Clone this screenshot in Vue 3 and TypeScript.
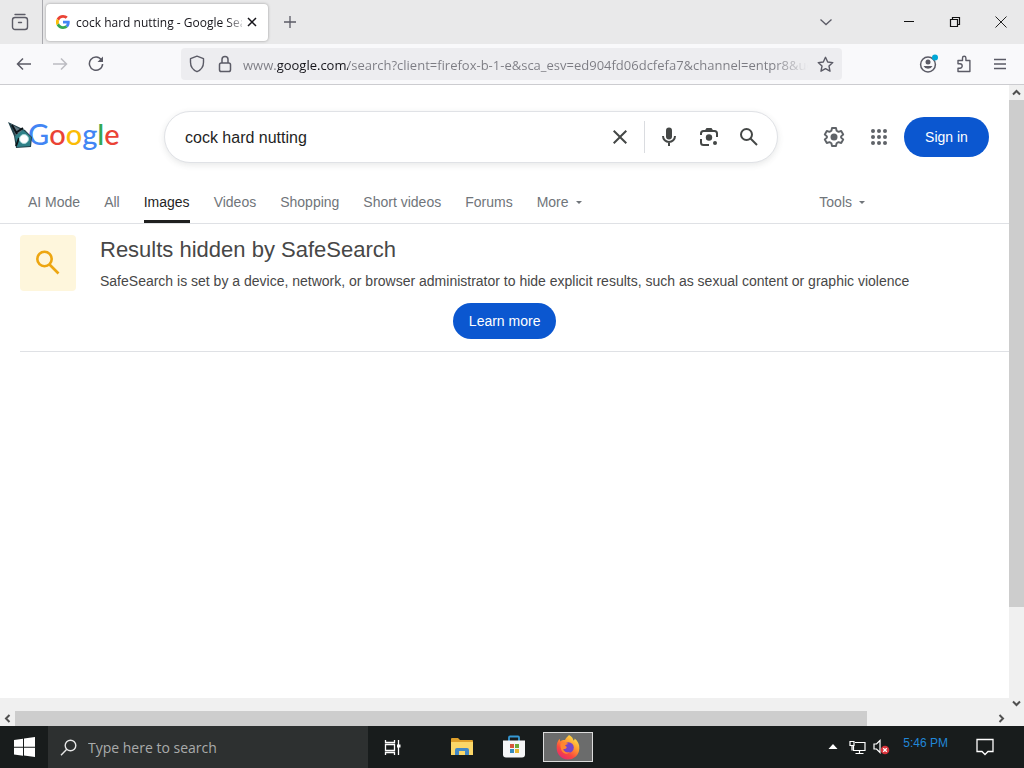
<script setup lang="ts">
import { ref } from 'vue'

interface NavItem {
  label: string
  active?: boolean
  menu?: boolean
}

const address = ref('www.google.com/search?client=firefox-b-1-e&sca_esv=ed904fd06dcfefa7&channel=entpr8&udm=2')
const query = ref('cock hard nutting')
const taskbarQuery = ref('')

const navItems: NavItem[] = [
  { label: 'AI Mode' },
  { label: 'All' },
  { label: 'Images', active: true },
  { label: 'Videos' },
  { label: 'Shopping' },
  { label: 'Short videos' },
  { label: 'Forums' },
  { label: 'More', menu: true },
]

const logoLetters = [
  { char: 'G', tone: 'blue' },
  { char: 'o', tone: 'red' },
  { char: 'o', tone: 'yellow' },
  { char: 'g', tone: 'blue' },
  { char: 'l', tone: 'green' },
  { char: 'e', tone: 'red' },
]

const dots = [6, 12, 18]
</script>

<template>
  <div class="screen">
    <header class="tabs">
      <button class="icon-btn view-btn" aria-label="Firefox View">
        <svg width="18" height="18" viewBox="0 0 18 18" fill="none" stroke="#5b5b66" stroke-width="1.4" stroke-linecap="round">
          <path d="M4 1.5h10" /><rect x="1.5" y="4.5" width="15" height="12" rx="2.5" /><path d="M7.500 9.500h3" />
        </svg>
      </button>
      <div class="tab">
        <svg width="14" height="14" viewBox="0 0 48 48">
          <path fill="#ea4335" d="M24 9.5c3.5 0 6.700 1.200 9.200 3.600l6.900-6.900C35.900 2.400 30.500 0 24 0 14.600 0 6.500 5.400 2.600 13.200l8 6.200C12.400 13.700 17.700 9.500 24 9.500z" />
          <path fill="#4285f4" d="M47 24.500c0-1.600-.2-3.100-.4-4.500H24v9h12.900c-.6 3-2.300 5.500-4.800 7.200l7.700 6C44.400 38 47 31.800 47 24.500z" />
          <path fill="#fbbc05" d="M10.500 28.600a14.500 14.500 0 0 1 0-9.200l-8-6.200a24 24 0 0 0 0 21.600z" />
          <path fill="#34a853" d="M24 48c6.500 0 11.900-2.100 15.900-5.800l-7.700-6c-2.200 1.400-4.900 2.300-8.200 2.300-6.300 0-11.600-4.200-13.500-9.900l-8 6.200C6.500 42.600 14.600 48 24 48z" />
        </svg>
        <span class="tab-title">cock hard nutting - Google Sea</span>
        <button class="icon-btn tab-close" aria-label="Close tab">
          <svg width="10" height="10" viewBox="0 0 10 10" stroke="#15141a" stroke-width="1.500"><path d="M1 1l8 8M9 1l-8 8" /></svg>
        </button>
      </div>
      <button class="icon-btn new-tab" aria-label="New tab">
        <svg width="14" height="14" viewBox="0 0 14 14" stroke="#5b5b66" stroke-width="1.300"><path d="M7 1v12M1 7h12" /></svg>
      </button>
      <button class="icon-btn tab-list" aria-label="List all tabs">
        <svg width="14" height="14" viewBox="0 0 14 14" fill="none" stroke="#5b5b66" stroke-width="1.300"><path d="M1.500 4.500L7 9.500l5.500-5" /></svg>
      </button>
      <div class="window-buttons">
        <button class="icon-btn" aria-label="Minimize"><svg width="12" height="12" stroke="#111"><path d="M1 5.500h10" /></svg></button>
        <button class="icon-btn" aria-label="Restore">
          <svg width="12" height="12" fill="none" stroke="#111" stroke-width="1.200"><path d="M1.500 3.500h7v7h-7zM3.500 3.500v-2h7v7h-2" /></svg>
        </button>
        <button class="icon-btn" aria-label="Close"><svg width="12" height="12" stroke="#222"><path d="M.5.5l11 11M11.500.5l-11 11" /></svg></button>
      </div>
    </header>

    <div class="toolbar">
      <button class="icon-btn nav-btn" aria-label="Back">
        <svg width="16" height="16" fill="none" stroke="#5b5b66" stroke-width="1.500"><path d="M15 8H1.500M7 2.500L1.500 8 7 13.500" /></svg>
      </button>
      <button class="icon-btn nav-btn" aria-label="Forward" disabled>
        <svg width="16" height="16" fill="none" stroke="#bcbcc2" stroke-width="1.500"><path d="M1 8h13.500M9 2.500l5.500 5.500L9 13.500" /></svg>
      </button>
      <button class="icon-btn nav-btn" aria-label="Reload">
        <svg width="16" height="16" fill="none" stroke="#5b5b66" stroke-width="1.500"><path d="M13.500 4A6.600 6.600 0 1 0 14.600 8" /><path d="M15 .5v5.500H9.500z" fill="#5b5b66" stroke="none" /></svg>
      </button>
      <div class="address">
        <svg width="16" height="18" viewBox="0 0 16 18" fill="none" stroke="#5b5b66" stroke-width="1.400" stroke-linejoin="round"><path d="M8 1.200l6.500 2.500v3.500c0 4.500-2.500 7.700-6.500 9.500C4 14.900 1.500 11.700 1.500 7.200V3.700z" /></svg>
        <svg width="14" height="18" viewBox="0 0 14 18" fill="none" stroke="#5b5b66" stroke-width="1.500"><rect x="1.500" y="8" width="11" height="8.500" rx="1.800" /><path d="M4 8V4.500a3 3 0 0 1 6 0V8" /></svg>
        <input v-model="address" class="address-input" aria-label="Address" spellcheck="false" />
        <button class="icon-btn" aria-label="Bookmark this page">
          <svg width="17" height="17" viewBox="0 0 17 17" fill="none" stroke="#5b5b66" stroke-width="1.400" stroke-linejoin="round"><path d="M8.500 1.300l2.200 4.700 5.100.6-3.800 3.500 1 5.100-4.500-2.500L4 15.200l1-5.100L1.200 6.600l5.100-.6z" /></svg>
        </button>
      </div>
      <div class="browser-actions">
        <button class="icon-btn" aria-label="Account">
          <svg width="20" height="20" viewBox="0 0 20 20"><circle cx="10" cy="10.500" r="7.400" fill="none" stroke="#5b5b66" stroke-width="1.500" /><circle cx="10" cy="8" r="2.500" fill="#5b5b66" /><path d="M5.500 12h9a5 5 0 0 1-9 0z" fill="#5b5b66" /><circle cx="17" cy="3.500" r="3" fill="#00a7d6" /></svg>
        </button>
        <button class="icon-btn" aria-label="Extensions">
          <svg width="16" height="18" viewBox="0 0 16 18" fill="none" stroke="#5b5b66" stroke-width="1.400" stroke-linejoin="round"><path d="M2 8V5.500h4.500V3a1.700 1.700 0 0 1 3.400 0v2.500h4v11H2v-3.300h2a2 2 0 0 0 0-4.400H2z" /></svg>
        </button>
        <button class="icon-btn" aria-label="Menu"><svg width="14" height="12" stroke="#5b5b66" stroke-width="1.300"><path d="M1 1.500h12M1 6h12M1 10.500h12" /></svg></button>
      </div>
    </div>

    <div class="viewport">
      <div class="page">
        <header class="search-row">
          <a class="logo" href="#" aria-label="Google"><span v-for="(l, i) in logoLetters" :key="i" :class="l.tone">{{ l.char }}</span>
            <svg class="pointer" width="26" height="27" viewBox="0 0 26 27">
              <path d="M0 0l17 8 7 7-1 10-15 1-2-12z" fill="#24434c" />
              <path d="M3 2l12 7-7 5z" fill="#647984" />
              <path d="M7 14l8-6 8 7-1 9-13 1z" fill="#2f8188" />
              <path d="M4 3l5 9M9 10l6-4M8 24l3-8" stroke="#0b1419" stroke-width="2" />
              <circle cx="16" cy="17" r="4.500" fill="#fff" stroke="#a8d7d8" />
            </svg>
          </a>
          <form class="search-box" role="search" @submit.prevent>
            <input v-model="query" class="search-input" aria-label="Search" spellcheck="false" />
            <button class="icon-btn" type="button" aria-label="Clear" @click="query = ''">
              <svg width="24" height="24" fill="#444746" viewBox="0 0 24 24"><path d="M19 6.410L17.590 5 12 10.590 6.410 5 5 6.410 10.590 12 5 17.590 6.410 19 12 13.410 17.590 19 19 17.590 13.410 12z" /></svg>
            </button>
            <span class="separator"></span>
            <button class="icon-btn" type="button" aria-label="Search by voice">
              <svg width="24" height="24" viewBox="0 0 24 24"><rect x="9" y="2.500" width="6" height="12" rx="3" fill="#444746" /><path d="M6 11a6 6 0 0 0 12 0M12 17v4" fill="none" stroke="#444746" stroke-width="2" /></svg>
            </button>
            <button class="icon-btn" type="button" aria-label="Search by image">
              <svg width="24" height="24" viewBox="0 0 24 24" fill="none" stroke="#444746" stroke-width="2"><path d="M4 10V8.500a2.500 2.500 0 0 1 2.500-2.500h11A2.500 2.500 0 0 1 20 8.500V12M4 14v3.500A2.500 2.500 0 0 0 6.500 20H12" /><path d="M7.500 6l2-3h5l2 3z" fill="#444746" stroke="none" /><circle cx="12" cy="12.500" r="3.200" fill="#444746" stroke="none" /><circle cx="18" cy="18" r="2" fill="#444746" stroke="none" /></svg>
            </button>
            <button class="icon-btn" aria-label="Search">
              <svg width="24" height="24" viewBox="0 0 24 24" fill="none" stroke="#444746" stroke-width="2"><circle cx="9.500" cy="9.500" r="5.500" /><path d="M13.500 13.500l6.500 6.500" /></svg>
            </button>
          </form>
          <div class="account">
            <button class="icon-btn" aria-label="Settings">
              <svg width="24" height="24" viewBox="0 0 24 24" fill="none" stroke="#5f6368" stroke-width="1.900" stroke-linejoin="round"><path d="M10 3h4l.6 2.800 1.900 1.100 2.700-.9 2 3.500-2.100 1.900v1.200l2.100 1.900-2 3.500-2.700-.9-1.900 1.100L14 21h-4l-.6-2.800-1.900-1.100-2.700.9-2-3.500 2.100-1.900v-1.200L2.800 9.500l2-3.500 2.700.9 1.900-1.100z" /><circle cx="12" cy="12" r="3.500" fill="#5f6368" stroke="none" /></svg>
            </button>
            <button class="icon-btn" aria-label="Google apps">
              <svg width="24" height="24" viewBox="0 0 24 24" fill="#5f6368"><template v-for="y in dots" :key="y"><circle v-for="x in dots" :key="x" :cx="x" :cy="y" r="2" /></template></svg>
            </button>
            <a class="pill sign-in" href="#">Sign in</a>
          </div>
        </header>

        <nav class="filters">
          <a v-for="item in navItems" :key="item.label" href="#" :class="['filter', { active: item.active }]">{{ item.label }}<i v-if="item.menu" class="caret"></i></a>
          <button class="filter tools">Tools<i class="caret"></i></button>
        </nav>

        <main class="notice">
          <div class="notice-icon">
            <svg width="32" height="32" viewBox="0 0 32 32" fill="none" stroke="#eda611" stroke-width="2.600"><circle cx="12.500" cy="12" r="7.200" /><path d="M17.500 17.500l9 9" /></svg>
          </div>
          <div class="notice-body">
            <h1>Results hidden by SafeSearch</h1>
            <p>SafeSearch is set by a device, network, or browser administrator to hide explicit results, such as sexual content or graphic violence</p>
            <a class="pill learn" href="#">Learn more</a>
          </div>
        </main>
      </div>
      <div class="v-scroll">
        <svg width="15" height="15" fill="none" stroke="#505050" stroke-width="2"><path d="M4 9.500L7.500 6 11 9.500" /></svg>
        <div class="v-track"><div class="v-thumb"></div></div>
        <svg width="15" height="15" fill="none" stroke="#505050" stroke-width="2"><path d="M4 5.500L7.500 9 11 5.500" /></svg>
      </div>
    </div>
    <div class="h-scroll">
      <svg width="15" height="15" fill="none" stroke="#505050" stroke-width="2"><path d="M9.500 4L6 7.500 9.500 11" /></svg>
      <div class="h-track"><div class="h-thumb"></div></div>
      <svg width="15" height="15" fill="none" stroke="#505050" stroke-width="2"><path d="M5.500 4L9 7.500 5.500 11" /></svg>
    </div>

    <footer class="taskbar">
      <button class="icon-btn start" aria-label="Start">
        <svg width="21" height="20" fill="#fff"><path d="M0 3l9-1.300v8H0zM10 1.500L21 0v9.700H10zM0 10.700h9v8L0 17.400zM10 10.700h11V20l-11-1.400z" /></svg>
      </button>
      <div class="task-search">
        <svg width="17" height="17" fill="none" stroke="#e6e6e6" stroke-width="1.400"><circle cx="10.500" cy="6.500" r="5.300" /><path d="M6.800 10.300L1 16.200" /></svg>
        <input v-model="taskbarQuery" placeholder="Type here to search" aria-label="Type here to search" />
      </div>
      <div class="apps">
        <button class="icon-btn app" aria-label="Task view">
          <svg width="17" height="17" fill="none" stroke="#fff" stroke-width="1.300"><path d="M1.500 1v2.500h9V1M1.500 5.500h9v6h-9zM1.500 16v-2.500h9V16M14.500 1v15" /><path d="M13 5.500h3.500v3H13z" fill="#fff" stroke="none" /></svg>
        </button>
        <button class="icon-btn app files" aria-label="File Explorer">
          <svg width="24" height="20" viewBox="0 0 24 20"><path d="M1 2q0-1 1-1h6l2 2h12q1 0 1 1v14H1z" fill="#dfa02b" /><path d="M1 5h22v13H1z" fill="#fbd768" /><path d="M5 18v-5q0-2 2-2h10q2 0 2 2v5h-4v-4H9v4z" fill="#4288c6" /></svg>
        </button>
        <button class="icon-btn app" aria-label="Microsoft Store">
          <svg width="24" height="24" viewBox="0 0 24 24"><path d="M7 7V2.500Q7 1.500 8 1.500h8q1 0 1 1V7" fill="none" stroke="#3598d3" stroke-width="1.800" /><path d="M1 5.500h22v14q0 3-3 3H4q-3 0-3-3z" fill="#f5f6f7" /><path d="M8 9h4v4H8z" fill="#d8573b" /><path d="M13 9h4v4h-4z" fill="#6eaa38" /><path d="M8 14h4v4H8z" fill="#368bbd" /><path d="M13 14h4v4h-4z" fill="#e7b62f" /></svg>
        </button>
        <button class="icon-btn app firefox" aria-label="Firefox">
          <svg width="26" height="26" viewBox="0 0 26 26">
            <defs><linearGradient id="flame" x1="0.850" y1="0" x2="0.200" y2="1"><stop offset="0" stop-color="#fff14d" /><stop offset="0.400" stop-color="#ff9830" /><stop offset="0.700" stop-color="#f9483f" /><stop offset="1" stop-color="#e22776" /></linearGradient></defs>
            <path d="M14 1c3 1.500 4 3.500 4.500 5.500 1-.3 1.200-1.500 1.200-2 3 2.500 5 6 4.600 10A11.300 11.300 0 0 1 1.700 14C1.400 10.500 2.500 7 4.500 4.800l.8 2.700C7 6 9 5.700 10 6c1-2 2.500-3.500 4-5z" fill="url(#flame)" />
            <circle cx="13.500" cy="13.500" r="5.300" fill="#7646c8" /><path d="M5.500 10c2-2 5-2 8 0-2 .2-3 1-3.500 2 1.500 0 2.500 1.500 1 2.500-1 .7-2 .5-3 .5 1 3 4 4 7 3-4 4-10 1-9.500-8z" fill="#ff8632" />
          </svg>
        </button>
      </div>
      <div class="tray">
        <button class="icon-btn" aria-label="Show hidden icons"><svg width="10" height="6" fill="#fff"><path d="M5 0l4.500 5h-9z" /></svg></button>
        <button class="icon-btn" aria-label="Network"><svg width="17" height="15" fill="none" stroke="#fff" stroke-width="1.200"><path d="M6 2.500h10v8H4.500V6M10.500 10.500v3M6.500 13.500h8M1 1.500h4v4H1zM3 5.500v5" /></svg></button>
        <button class="icon-btn" aria-label="Volume muted"><svg width="17" height="16" viewBox="0 0 17 16" fill="none"><path d="M1 5h2.500L7 1.500v12L3.500 10H1z" stroke="#fff" stroke-width="1.200" /><circle cx="12" cy="11" r="4.300" fill="#d8323a" /><path d="M10.200 9.200l3.600 3.600M13.800 9.200l-3.600 3.600" stroke="#fff" stroke-width="1.300" /></svg></button>
        <time class="clock">5:46 PM</time>
        <button class="icon-btn alerts" aria-label="Notifications"><svg width="18" height="18" fill="none" stroke="#fff" stroke-width="1.300"><path d="M1 1.500h16v12h-5L9 16.500l-3-3H1z" /></svg></button>
      </div>
    </footer>
  </div>
</template>

<style>
body {
  margin: 0;
}
</style>

<style scoped>
* {
  box-sizing: border-box;
}
.screen {
  display: flex;
  flex-direction: column;
  min-height: 100vh;
  background: #fff;
  font-family: "Liberation Sans", Arial, sans-serif;
  color: #1f1f1f;
}
svg {
  display: block;
  flex: none;
}
.icon-btn {
  display: flex;
  align-items: center;
  justify-content: center;
  flex: none;
  padding: 0;
  border: 0;
  background: none;
}
input {
  min-width: 0;
  padding: 0;
  border: 0;
  outline: 0;
  background: none;
}
a {
  text-decoration: none;
}
.tabs {
  display: flex;
  align-items: center;
  height: 44px;
  background: #e9e9ea;
}
.view-btn {
  width: 43px;
  height: 44px;
  padding-right: 3px;
  border-right: 1px solid #a9a9ae;
}
.tab {
  display: flex;
  align-items: center;
  width: 222px;
  height: 37px;
  margin-left: 3px;
  padding: 0 6px 0 10px;
  border-radius: 4px;
  background: #fff;
  box-shadow: 0 0 3px rgba(0, 0, 0, 0.35);
}
.tab-title {
  flex: 1;
  min-width: 0;
  margin-left: 6px;
  padding-top: 2px;
  white-space: nowrap;
  font: 12px/20px "Open Sans", "Noto Sans", sans-serif;
  color: transparent;
  background: linear-gradient(90deg, #15141a 150px, #c4c4c8 166px);
  background-clip: text;
}
.tab-close {
  width: 20px;
  height: 20px;
}
.new-tab {
  width: 32px;
  height: 32px;
  margin-left: 6px;
}
.tab-list {
  width: 32px;
  height: 32px;
  margin-left: auto;
}
.window-buttons {
  display: flex;
  margin-left: 44px;
}
.window-buttons .icon-btn {
  width: 46px;
  height: 44px;
}
.toolbar {
  display: flex;
  align-items: center;
  height: 41px;
  padding-left: 6px;
  border-bottom: 1px solid #ccccd0;
  background: #f9f9fb;
}
.nav-btn {
  width: 36px;
  height: 32px;
}
.address {
  display: flex;
  align-items: center;
  flex: 1;
  height: 32px;
  margin-left: 67px;
  padding: 0 8px;
  border-radius: 4px;
  background: #ededf0;
  gap: 13px;
}
.address-input {
  flex: 1;
  height: 26px;
  padding-top: 2px;
  margin-right: -4px;
  margin-left: -2px;
  overflow: hidden;
  font: 13px/24px "Open Sans", "Noto Sans", sans-serif;
  color: transparent;
  background: linear-gradient(90deg, #7c7c83 33px, #15141a 33px, #15141a 105px, #7c7c83 105px, #7c7c83 94%, transparent);
  background-clip: text;
}
.browser-actions {
  display: flex;
  align-items: center;
  margin: 0 6px 0 68px;
}
.browser-actions .icon-btn {
  width: 36px;
  height: 32px;
}
.viewport {
  display: flex;
  flex: 1;
}
.page {
  flex: 1;
  min-width: 0;
  border-bottom: 13px solid #f0f0f0;
}
.search-row {
  display: flex;
  align-items: center;
  padding: 26px 20px 0 28px;
}
.logo {
  position: relative;
  display: flex;
  width: 136px;
  padding-bottom: 6px;
  font: 29px/40px Lato, "Open Sans", sans-serif;
  font-weight: 500;
}
.blue {
  color: #4285f4;
}
.red {
  color: #ea4335;
}
.yellow {
  color: #fbbc05;
}
.green {
  color: #34a853;
}
.pointer {
  position: absolute;
  top: 8px;
  left: -20px;
}
.search-box {
  display: flex;
  align-items: center;
  flex: 1;
  height: 52px;
  padding: 0 8px 0 20px;
  border: 1px solid #e0e2e6;
  border-radius: 26px;
  background: #fff;
  box-shadow: 0 2px 6px rgba(60, 64, 67, 0.12);
}
.search-box .icon-btn {
  width: 40px;
  height: 40px;
}
.search-input {
  flex: 1;
  height: 40px;
  padding-top: 2px;
  font: 16px/24px "Liberation Sans", Arial, sans-serif;
  color: #1f1f1f;
}
.separator {
  width: 1px;
  height: 32px;
  margin: 0 4px;
  background: #dadce0;
}
.account {
  display: flex;
  align-items: center;
  margin-left: 36px;
  gap: 5px;
}
.account .icon-btn {
  width: 40px;
  height: 40px;
}
.pill {
  display: flex;
  align-items: center;
  justify-content: center;
  border-radius: 20px;
  background: #0b57d0;
  color: #fff;
  font-size: 14px;
}
.sign-in {
  width: 85px;
  height: 40px;
}
.filters {
  display: flex;
  gap: 24px;
  height: 43px;
  margin-top: 18px;
  padding: 0 20px 0 28px;
  border-bottom: 1px solid #dfe1e5;
}
.filter {
  display: flex;
  align-items: center;
  padding: 3px 0 0;
  border: 0;
  border-bottom: 3px solid transparent;
  background: none;
  color: #70757a;
  font: 14px/20px "Liberation Sans", Arial, sans-serif;
  white-space: nowrap;
}
.active {
  border-color: #1f1f1f;
  color: #1f1f1f;
}
.caret {
  margin-left: 7px;
  border: 3px solid transparent;
  border-top: 3px solid #70757a;
  border-bottom: 0;
}
.tools {
  margin-right: 124px;
  margin-left: auto;
}
.notice {
  display: flex;
  align-items: flex-start;
  margin-left: 20px;
  padding: 11px 0 12px;
  border-bottom: 1px solid #dfe1e5;
  gap: 24px;
}
.notice-icon {
  display: flex;
  align-items: center;
  justify-content: center;
  width: 56px;
  height: 56px;
  border-radius: 4px;
  background: #fef6dc;
}
.notice-body {
  display: flex;
  flex-direction: column;
  align-items: center;
}
h1 {
  align-self: flex-start;
  margin: 0;
  color: #474747;
  font-size: 22px;
  font-weight: 400;
  line-height: 30px;
}
p {
  margin: 6px 0 12px;
  color: #474747;
  font-size: 14px;
  line-height: 20px;
}
.learn {
  width: 103px;
  height: 36px;
}
.v-scroll {
  display: flex;
  flex-direction: column;
  width: 15px;
  background: #f0f0f0;
}
.v-track {
  flex: 1;
}
.v-thumb {
  height: 85%;
  background: #cdcdcd;
}
.h-scroll {
  display: flex;
  height: 15px;
  padding-right: 15px;
  background: #f0f0f0;
}
.h-track {
  flex: 1;
}
.h-thumb {
  width: 87%;
  height: 15px;
  background: #cdcdcd;
}
.taskbar {
  display: flex;
  height: 42px;
  background: #181c1c;
}
.start {
  width: 48px;
  height: 42px;
}
.task-search {
  display: flex;
  align-items: center;
  width: 320px;
  padding: 0 12px;
  background: #2d3030;
  gap: 11px;
}
.task-search input {
  flex: 1;
  height: 24px;
  font: 14px/20px "Open Sans", "Noto Sans", sans-serif;
  color: #fff;
}
.task-search input::placeholder {
  color: #a9abab;
  opacity: 1;
}
.apps {
  display: flex;
  align-items: center;
}
.app {
  width: 48px;
  height: 42px;
}
.files {
  width: 56px;
  margin-left: 18px;
}
.firefox {
  width: 50px;
  height: 30px;
  margin-left: 5px;
  border: 1px solid #dcdcdc;
  background: #6b6c6c;
}
.tray {
  display: flex;
  align-items: center;
  margin-left: auto;
  padding-right: 30px;
}
.tray .icon-btn {
  width: 24px;
  height: 42px;
}
.clock {
  margin: 0 28px 8px 10px;
  color: #2187d8;
  font: 12px/16px "Liberation Sans", Arial, sans-serif;
}
.tray .alerts {
  width: 18px;
}
</style>
